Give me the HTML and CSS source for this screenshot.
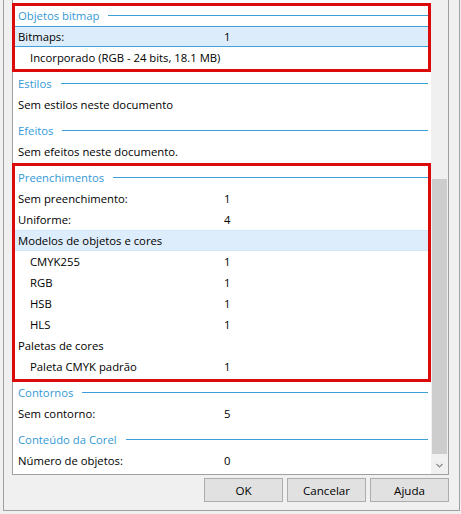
FILE: index.html
```html
<!DOCTYPE html>
<html lang="pt">
<head>
<meta charset="utf-8">
<link rel="stylesheet" href="styles.css">
</head>
<body>
<div class="frame">
  <div class="list">
    <div class="content">
      <div class="hdr"><span class="hdr-text">Objetos bitmap</span><span class="hdr-line"></span></div>
      <div class="row selected"><span class="lbl">Bitmaps:</span><span class="val">1</span></div>
      <div class="row"><span class="lbl ind">Incorporado (RGB - 24 bits, 18.1 MB)</span><span class="val"></span></div>

      <div class="hdr"><span class="hdr-text">Estilos</span><span class="hdr-line"></span></div>
      <div class="row"><span class="lbl wide">Sem estilos neste documento</span></div>

      <div class="hdr"><span class="hdr-text">Efeitos</span><span class="hdr-line"></span></div>
      <div class="row"><span class="lbl wide">Sem efeitos neste documento.</span></div>

      <div class="hdr"><span class="hdr-text">Preenchimentos</span><span class="hdr-line"></span></div>
      <div class="row"><span class="lbl">Sem preenchimento:</span><span class="val">1</span></div>
      <div class="row"><span class="lbl">Uniforme:</span><span class="val">4</span></div>
      <div class="row hover"><span class="lbl wide">Modelos de objetos e cores</span></div>
      <div class="row"><span class="lbl ind">CMYK255</span><span class="val">1</span></div>
      <div class="row"><span class="lbl ind">RGB</span><span class="val">1</span></div>
      <div class="row"><span class="lbl ind">HSB</span><span class="val">1</span></div>
      <div class="row"><span class="lbl ind">HLS</span><span class="val">1</span></div>
      <div class="row"><span class="lbl wide">Paletas de cores</span></div>
      <div class="row"><span class="lbl ind">Paleta CMYK padrão</span><span class="val">1</span></div>

      <div class="hdr"><span class="hdr-text">Contornos</span><span class="hdr-line"></span></div>
      <div class="row"><span class="lbl">Sem contorno:</span><span class="val">5</span></div>

      <div class="hdr"><span class="hdr-text">Conteúdo da Corel</span><span class="hdr-line"></span></div>
      <div class="row"><span class="lbl">Número de objetos:</span><span class="val">0</span></div>
    </div>
    <div class="scrollbar">
      <div class="track"><div class="thumb"></div></div>
      <div class="arrow">
        <svg width="17" height="17" viewBox="0 0 17 17"><polyline points="5.5,7 8.5,10 11.5,7" fill="none" stroke="#8a8a8a" stroke-width="1.2"/></svg>
      </div>
    </div>
  </div>
  <div class="buttons">
    <button class="btn">OK</button>
    <button class="btn">Cancelar</button>
    <button class="btn">Ajuda</button>
  </div>
</div>
<div class="mark mark-bitmap"></div>
<div class="mark mark-fill"></div>
</body>
</html>
```
FILE: styles.css
```css
html, body {
  margin: 0;
  padding: 0;
}
body {
  width: 461px;
  height: 514px;
  background: #f0f0f0;
  font-family: "Open Sans", "Noto Sans", sans-serif;
  font-size: 11.3px;
  color: #000;
  position: relative;
  overflow: hidden;
}
.frame {
  margin-left: 3px;
  width: 457px;
  height: 511px;
  box-sizing: border-box;
  border: 1px solid #a0a0a0;
  border-top: none;
  padding: 0 10px 8px 8px;
  display: flex;
  flex-direction: column;
}
.list {
  height: 475px;
  box-sizing: border-box;
  border: 1px solid #a0a0a0;
  border-top: none;
  background: #fff;
  display: flex;
}
.content {
  flex: 1;
  display: flex;
  flex-direction: column;
}
.hdr {
  height: 26px;
  padding: 5px 3px 0 5px;
  box-sizing: border-box;
  display: flex;
  align-items: center;
  color: #3399d6;
}
.hdr-text {
  line-height: 21px;
  height: 21px;
}
.hdr-line {
  flex: 1;
  height: 1px;
  background: #3c9fd8;
  margin-left: 9px;
}
.row {
  height: 21px;
  line-height: 21px;
  box-sizing: border-box;
  display: grid;
  grid-template-columns: 211px 1fr;
  margin-right: 2px;
}
.lbl {
  padding-left: 5px;
  white-space: nowrap;
}
.lbl.ind {
  padding-left: 17px;
}
.lbl.wide {
  grid-column: 1 / 3;
}
.row.selected {
  background: #dcecfb;
  border: 1px solid #3ea1d9;
  line-height: 19px;
}
.row.selected .lbl {
  padding-left: 4px;
}
.row.selected .val {
  margin-left: -1px;
}
.row.hover {
  background: #deedfb;
  border: 1px solid #d3e6f8;
  line-height: 19px;
}
.row.hover .lbl {
  padding-left: 4px;
}
.scrollbar {
  width: 17px;
  background: #f0f0f0;
  display: flex;
  flex-direction: column;
}
.track {
  flex: 1;
  position: relative;
}
.thumb {
  margin: 179px 1px 0 1px;
  height: 275px;
  background: #cdcdcd;
}
.arrow {
  height: 17px;
  display: flex;
}
.buttons {
  margin-top: 3px;
  display: flex;
  justify-content: flex-end;
  gap: 4px;
}
.btn {
  width: 79px;
  height: 24px;
  box-sizing: border-box;
  background: #e1e1e1;
  border: 1px solid #adadad;
  font-family: inherit;
  font-size: 11.6px;
  color: #000;
  padding: 0;
  margin: 0;
}
.mark {
  position: absolute;
  border: 3px solid #dc0b0b;
  box-sizing: border-box;
  pointer-events: none;
}
.mark-bitmap {
  left: 12px;
  top: 3px;
  width: 419px;
  height: 69px;
}
.mark-fill {
  left: 12px;
  top: 163px;
  width: 419px;
  height: 219px;
}
```
